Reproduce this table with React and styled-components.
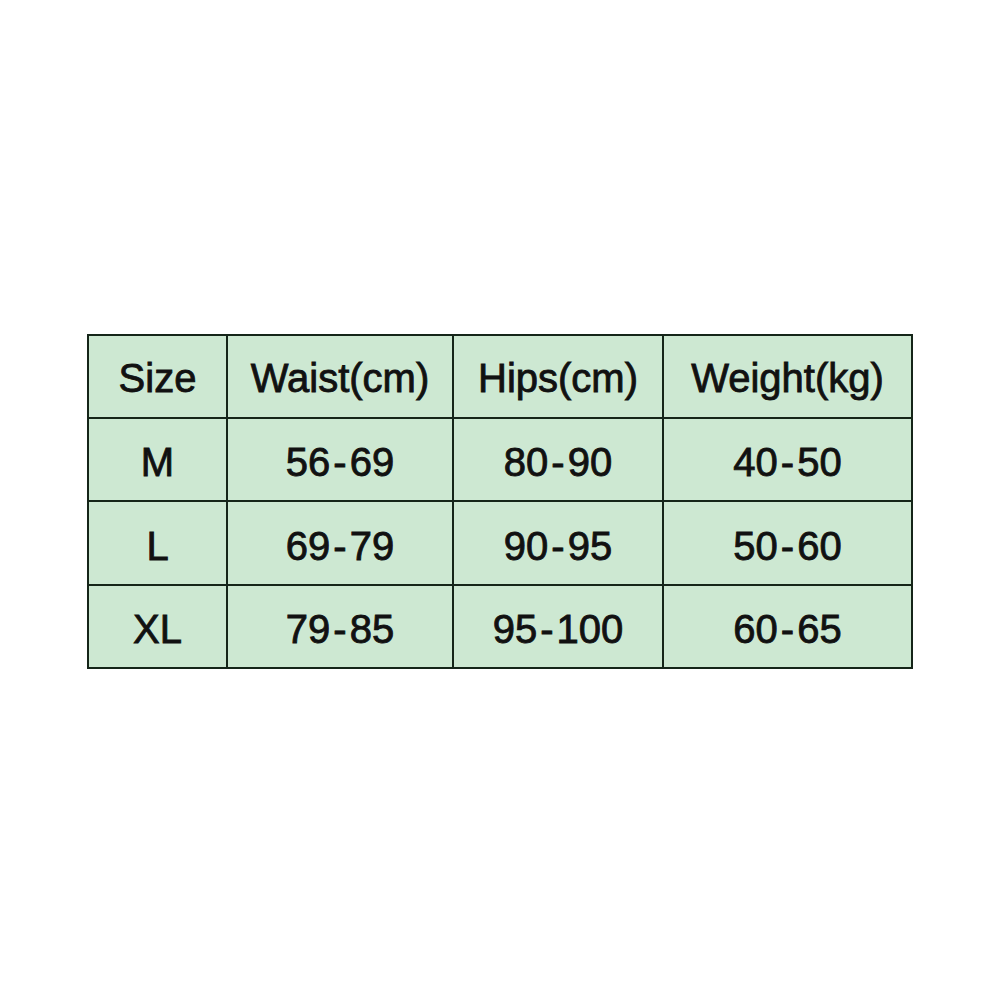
import React from "react";
import styled, { createGlobalStyle } from "styled-components";

const Global = createGlobalStyle`
  html, body { margin: 0; padding: 0; background: #ffffff; }
  body { font-family: "Liberation Sans", Arial, sans-serif; }
`;

const Page = styled.div`
  width: 1000px;
  height: 1000px;
  box-sizing: border-box;
  padding-top: 334px;
  display: flex;
  justify-content: center;
  align-items: flex-start;
  background: #ffffff;
`;

const Grid = styled.div`
  display: grid;
  grid-template-columns: 137px 224px 208px 247px;
  grid-template-rows: 81px 81px 82px 81px;
  gap: 2px;
  padding: 2px;
  background: #152519;
`;

const Cell = styled.div`
  background: #cde8d2;
  display: flex;
  align-items: center;
  justify-content: center;
  font-family: "Liberation Sans", Arial, sans-serif;
  font-size: 40px;
  color: #111111;
  -webkit-text-stroke: 0.85px #111111;
  padding-top: ${(p) => (p.$head ? "4px" : "6px")};
  box-sizing: border-box;
  white-space: nowrap;
`;

const Dash = styled.span`
  margin: 0 3px;
`;

const header = ["Size", "Waist(cm)", "Hips(cm)", "Weight(kg)"];
const rows = [
  ["M", "56-69", "80-90", "40-50"],
  ["L", "69-79", "90-95", "50-60"],
  ["XL", "79-85", "95-100", "60-65"],
];

function Value({ text }) {
  const parts = text.split("-");
  if (parts.length !== 2) return text;
  return (
    <>
      {parts[0]}
      <Dash>-</Dash>
      {parts[1]}
    </>
  );
}

export default function App() {
  return (
    <>
      <Global />
      <Page>
        <Grid>
          {header.map((h) => (
            <Cell key={h} $head>
              {h}
            </Cell>
          ))}
          {rows.map((r) =>
            r.map((c, i) => (
              <Cell key={r[0] + i}>
                <Value text={c} />
              </Cell>
            ))
          )}
        </Grid>
      </Page>
    </>
  );
}
